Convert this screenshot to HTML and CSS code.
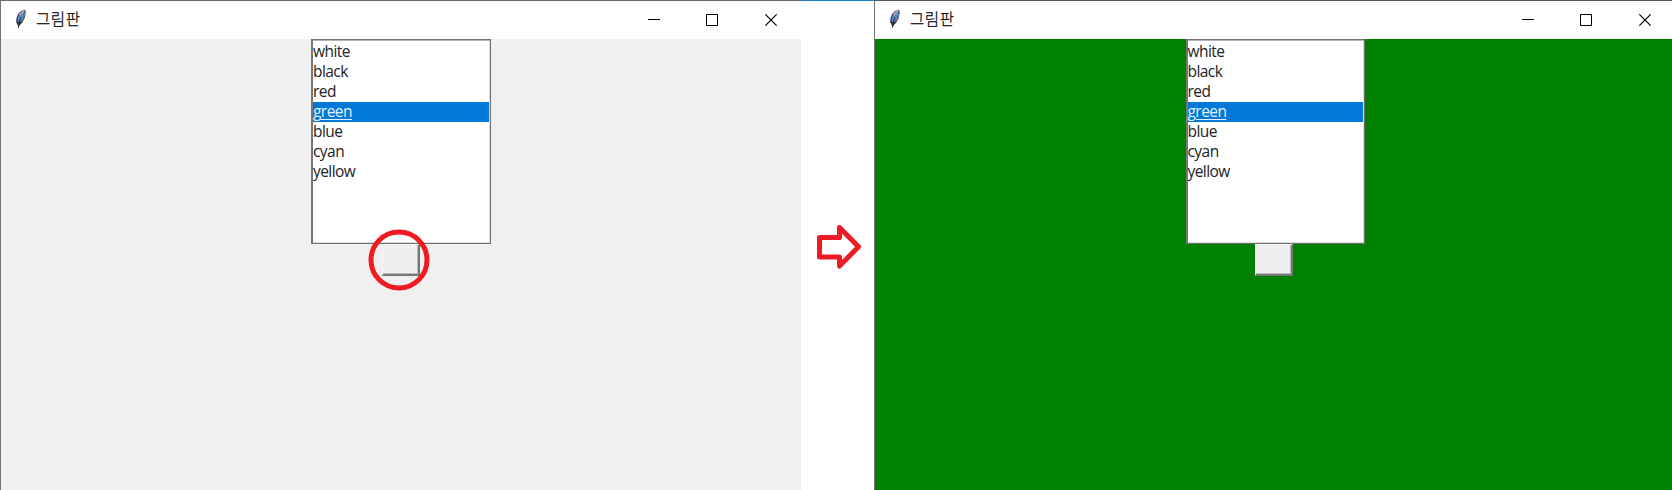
FILE: index.html
```
<!DOCTYPE html>
<html lang="ko">
<head>
<meta charset="utf-8">
<title>그림판</title>
<link rel="stylesheet" href="styles.css">
</head>
<body>
<svg class="defs" width="0" height="0">
  <symbol id="feather" viewBox="0 0 12 20">
    <path d="M3.3 19 2.7 16.2 1.2 13.2 1.5 9 3.2 5 6 2 10.2.7 10.7 4 9.8 9 7.2 13.8 4.5 16.5Z" fill="#343a44"/>
    <path d="M3 13 2.7 9.5 4.5 5.4 6.7 3 9.2 2 8.9 6 7.6 9.5 5 13Z" fill="#5191d4"/>
    <path d="M4.5 6.2 6.7 3.2 9.5 1.7" fill="none" stroke="#b9bec4" stroke-width="1.3"/>
    <path d="M9.7 4 8.8 8.5 6.6 12.5" fill="none" stroke="#8b929b"/>
    <path d="M6 8 4.500 12 3.5 18.5" fill="none" stroke="#202b3c"/>
  </symbol>
  <symbol id="controls" viewBox="0 0 132 12">
    <path d="M0 5.5H12M58.5.5H69.500V11.500H58.500Z" fill="none" stroke="#000"/>
    <path d="M117.300.300 128.700 11.700M128.700.300 117.300 11.700" fill="none" stroke="#000" stroke-width="1.1"/>
  </symbol>
</svg>
<main class="scene">
  <section class="window">
    <header class="titlebar"><svg class="feather"><use href="#feather"/></svg><h1 class="title">그림판</h1><svg class="controls"><use href="#controls"/></svg></header>
    <div class="client">
      <ul class="listbox"><li>white</li><li>black</li><li>red</li><li class="selected">green</li><li>blue</li><li>cyan</li><li>yellow</li></ul>
      <div class="button-wrap"><button class="button" aria-label="색 적용"></button>
        <svg class="ring" viewBox="0 0 62 62"><circle cx="31" cy="31" r="28" fill="none" stroke="#ed1c24" stroke-width="5"/></svg></div>
    </div>
  </section>
  <div class="between"><svg class="arrow" viewBox="0 0 46 46"><path d="M3.500 13.500H23.500V3.500L42.500 22.800 23.500 42V33H3.500Z" fill="#fff" stroke="#ed1c24" stroke-width="5" stroke-linejoin="round"/></svg></div>
  <section class="window window-green">
    <header class="titlebar"><svg class="feather"><use href="#feather"/></svg><h1 class="title">그림판</h1><svg class="controls"><use href="#controls"/></svg></header>
    <div class="client">
      <ul class="listbox"><li>white</li><li>black</li><li>red</li><li class="selected">green</li><li>blue</li><li>cyan</li><li>yellow</li></ul>
      <div class="button-wrap"><button class="button" aria-label="색 적용"></button></div>
    </div>
  </section>
</main>
</body>
</html>
```

FILE: styles.css
```
* { box-sizing: border-box; }
body { margin: 0; background: #fff; overflow: hidden; }
.defs { position: absolute; }
.scene { display: grid; grid-template-columns: 801px 73px 798px; height: 490px; }
.window {
  display: flex; flex-direction: column;
  border-top: 1px solid #6b6b6b; border-left: 1px solid #737373;
  background: #fff;
}
.window-green { border-top-color: #56545a; }
.titlebar { display: flex; height: 38px; padding-left: 14px; }
.feather { width: 12px; height: 20px; margin-top: 8px; flex: none; }
.title {
  margin: 0 0 0 9px; font: 300 15.5px/34px "Noto Sans CJK KR", sans-serif;
  color: #000; letter-spacing: .6px; -webkit-text-stroke: .25px #000;
}
.controls { width: 132px; height: 12px; margin: 13px 21px 0 auto; flex: none; }
.window-green .controls { margin-right: 18px; }
.client {
  flex: 1; display: flex; flex-direction: column; align-items: center;
  background: #f0f0f0;
}
.window-green .client { background: #008000; padding-left: 3px; }
.listbox {
  list-style: none; margin: 0; padding: 2px 1px 0 0; width: 180px; height: 205px;
  border: 1px solid #707070; border-left: 2px solid #777;
  background: #fff; box-shadow: inset 0 1px #b5b5b5, inset 0 -1px #ddd, inset -1px 0 #ddd;
  font: 15.5px/18px "Open Sans", sans-serif; letter-spacing: -.55px; color: #222;
}
.window-green .listbox { width: 179px; }
.listbox li { height: 20px; }
.listbox .selected {
  background: #0078d7; color: #e4f1fc; text-decoration: underline;
  text-decoration-thickness: 1px; text-underline-offset: 2px;
}
.button-wrap { position: relative; margin-right: 1px; height: 32px; }
.window-green .button-wrap { margin-right: 2px; }
.button {
  display: block; width: 38px; height: 32px; margin: 0; padding: 0;
  border: solid; border-width: 1px 2px 2px 1px;
  border-color: #fafafa #777 #777 #fafafa; border-radius: 0; background: #efefef;
  box-shadow: inset -1px -1px #bbb;
}
.ring { position: absolute; left: -13.5px; top: -15.5px; width: 62px; height: 62px; }
.between { border-top: 1px solid #1683d8; padding: 223px 0 0 15px; }
.arrow { display: block; width: 46px; height: 46px; }
```
